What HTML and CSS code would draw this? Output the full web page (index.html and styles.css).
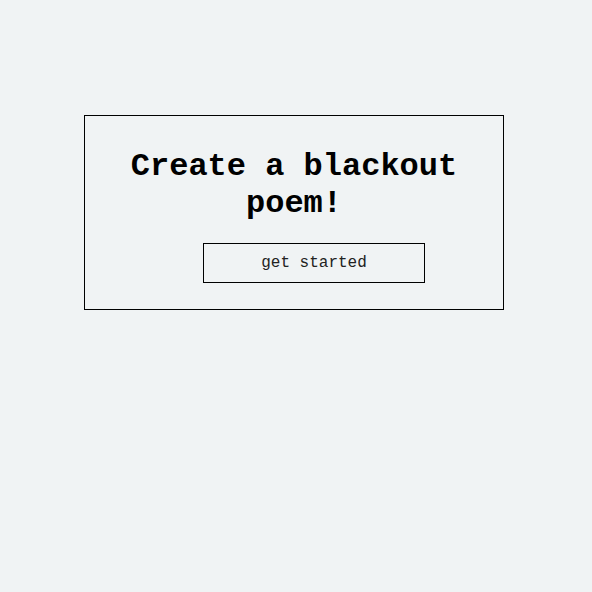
FILE: index.html
```html
<!DOCTYPE html>
<html>
<head>
<meta charset="utf-8">
<link rel="stylesheet" href="styles.css">
</head>
<body>
<div class="card">
  <h1 class="title">Create a blackout poem!</h1>
  <div class="actions">
    <button class="start">get started</button>
  </div>
</div>
</body>
</html>
```
FILE: styles.css
```css
html, body {
  background: #f0f3f4;
}
body {
  margin: 8px;
  font-family: "Liberation Mono", "Courier New", monospace;
}
.card {
  box-sizing: border-box;
  width: 420px;
  height: 195px;
  margin: 107px 0 0 76px;
  border: 1px solid #000;
  padding: 10px 40px;
}
.title {
  margin: 22px 0 0;
  font-size: 32px;
  line-height: 37px;
  font-weight: bold;
  text-align: center;
  color: #000;
}
.actions {
  margin-top: 21px;
  padding-left: 78px;
}
.start {
  box-sizing: border-box;
  width: 222px;
  height: 40px;
  background: transparent;
  border: 1px solid #000;
  font-family: "Liberation Mono", "Courier New", monospace;
  font-size: 16px;
  color: #222;
  padding: 0;
}
```
